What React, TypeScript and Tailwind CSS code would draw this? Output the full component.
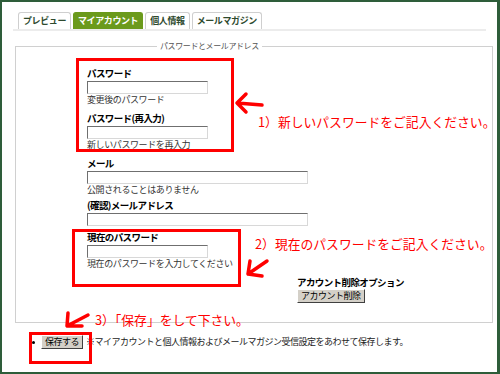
import React from "react";

const jp = { fontFamily: '"Noto Sans CJK JP", "Noto Sans", sans-serif' };

const tabs = [
  { label: "プレビュー", active: false },
  { label: "マイアカウント", active: true },
  { label: "個人情報", active: false },
  { label: "メールマガジン", active: false },
];

const inputClasses =
  "block h-[13px] bg-white border border-t-[#6f6f6f] border-l-[#6f6f6f] border-b-[#d8d8d8] border-r-[#d8d8d8]";

const buttonClasses =
  "h-[14px] px-[3px] whitespace-nowrap bg-[#d4d0c8] border border-t-white border-l-white border-b-[#404040] border-r-[#404040] text-[9px] leading-[12px] tracking-[-0.5px] text-black";

const Field = ({
  label,
  help,
  wide,
  mt,
}: {
  label: string;
  help?: string;
  wide?: boolean;
  mt: string;
}) => (
  <div className={mt}>
    <div className="text-[9.5px] leading-[12px] font-bold tracking-[-0.6px] text-black">
      {label}
    </div>
    <div className={`${inputClasses} mt-[2px] ${wide ? "w-[221px]" : "w-[121px]"}`} />
    {help && (
      <div className="text-[9px] leading-[11px] tracking-[-0.4px] text-[#333]">
        {help}
      </div>
    )}
  </div>
);

export default function App() {
  return (
    <div
      className="relative w-[500px] h-[374px] bg-white border-[#2e5d3a] border-t-2 border-l-2 border-b-2 border-r-[3px] overflow-hidden"
      style={jp}
    >
      {/* tabs */}
      <div className="mx-[11px] mt-[10px] flex gap-[2px] pl-[5px] border-b-2 border-[#ececec]">
        {tabs.map((t) => (
          <div
            key={t.label}
            className={`h-[17px] px-[4px] flex items-center rounded-t-[3px] border border-b-0 text-[9px] font-bold tracking-[-0.4px] ${
              t.active
                ? "bg-[#6b9a1c] border-[#6b9a1c] text-white"
                : "bg-white border-[#cfcfcf] text-[#2e4a2e]"
            }`}
          >
            {t.label}
          </div>
        ))}
      </div>

      {/* fieldset */}
      <fieldset className="ml-[13px] mr-[4px] mt-[10px] border border-[#d0d0d0] pl-[71px] pb-[19px]">
        <legend className="ml-[70px] px-[3px] text-[8px] leading-[10px] tracking-[-0.4px] text-[#555]">
          パスワードとメールアドレス
        </legend>
        <Field label="パスワード" help="変更後のパスワード" mt="mt-[16px]" />
        <Field label="パスワード(再入力)" help="新しいパスワードを再入力" mt="mt-[7px]" />
        <Field label="メール" help="公開されることはありません" wide mt="mt-[7px]" />
        <Field label="(確認)メールアドレス" wide mt="mt-[4px]" />
        <Field
          label="現在のパスワード"
          help="現在のパスワードを入力してください"
          mt="mt-[5px]"
        />
        <div className="ml-[210px] mt-[7px] flex flex-col items-start">
          <div className="text-[9.5px] leading-[12px] font-bold tracking-[-0.6px] text-black whitespace-nowrap">
            アカウント削除オプション
          </div>
          <button className={`${buttonClasses} mt-[1px]`}>アカウント削除</button>
        </div>
      </fieldset>

      {/* save row */}
      <div className="mt-[12px] pl-[30px] flex items-center">
        <span className="w-[3px] h-[3px] rounded-full bg-black" />
        <button className={`${buttonClasses} ml-[6px]`}>保存する</button>
        <span className="ml-[3px] text-[9px] leading-[12px] tracking-[-0.5px] text-[#222] whitespace-nowrap">
          ※マイアカウントと個人情報およびメールマガジン受信設定をあわせて保存します。
        </span>
      </div>

      {/* annotations */}
      <div className="absolute left-[74px] top-[56px] w-[158px] h-[94px] border-[3px] border-[#ff0000]" />
      <div className="absolute left-[70px] top-[227px] w-[169px] h-[58px] border-[3px] border-[#ff0000]" />
      <div className="absolute left-[27px] top-[330px] w-[63px] h-[32px] border-[3px] border-[#ff0000]" />

      <div className="absolute left-[256px] top-[113px] text-[12.8px] leading-[14px] text-[#ff0000] whitespace-nowrap">
        1）新しいパスワードをご記入ください。
      </div>
      <div className="absolute left-[253px] top-[235px] text-[12.8px] leading-[14px] text-[#ff0000] whitespace-nowrap">
        2）現在のパスワードをご記入ください。
      </div>
      <div className="absolute left-[93px] top-[311px] text-[12.8px] leading-[14px] text-[#ff0000] whitespace-nowrap">
        3）「保存」をして下さい。
      </div>

      <svg
        className="absolute left-[-2px] top-[-2px] pointer-events-none"
        width="500"
        height="374"
        viewBox="0 0 500 374"
      >
        <g stroke="#ff0000" strokeWidth="3.5" fill="none" strokeLinecap="round" strokeLinejoin="round">
          <path d="M237 103 L262 105 M246 94 L237 103 L246 112" />
          <path d="M248 274 L267 261 M250 261 L248 274 L262 276" />
          <path d="M67 326 L88 315 M68 313 L67 326 L82 326" />
        </g>
      </svg>
    </div>
  );
}
